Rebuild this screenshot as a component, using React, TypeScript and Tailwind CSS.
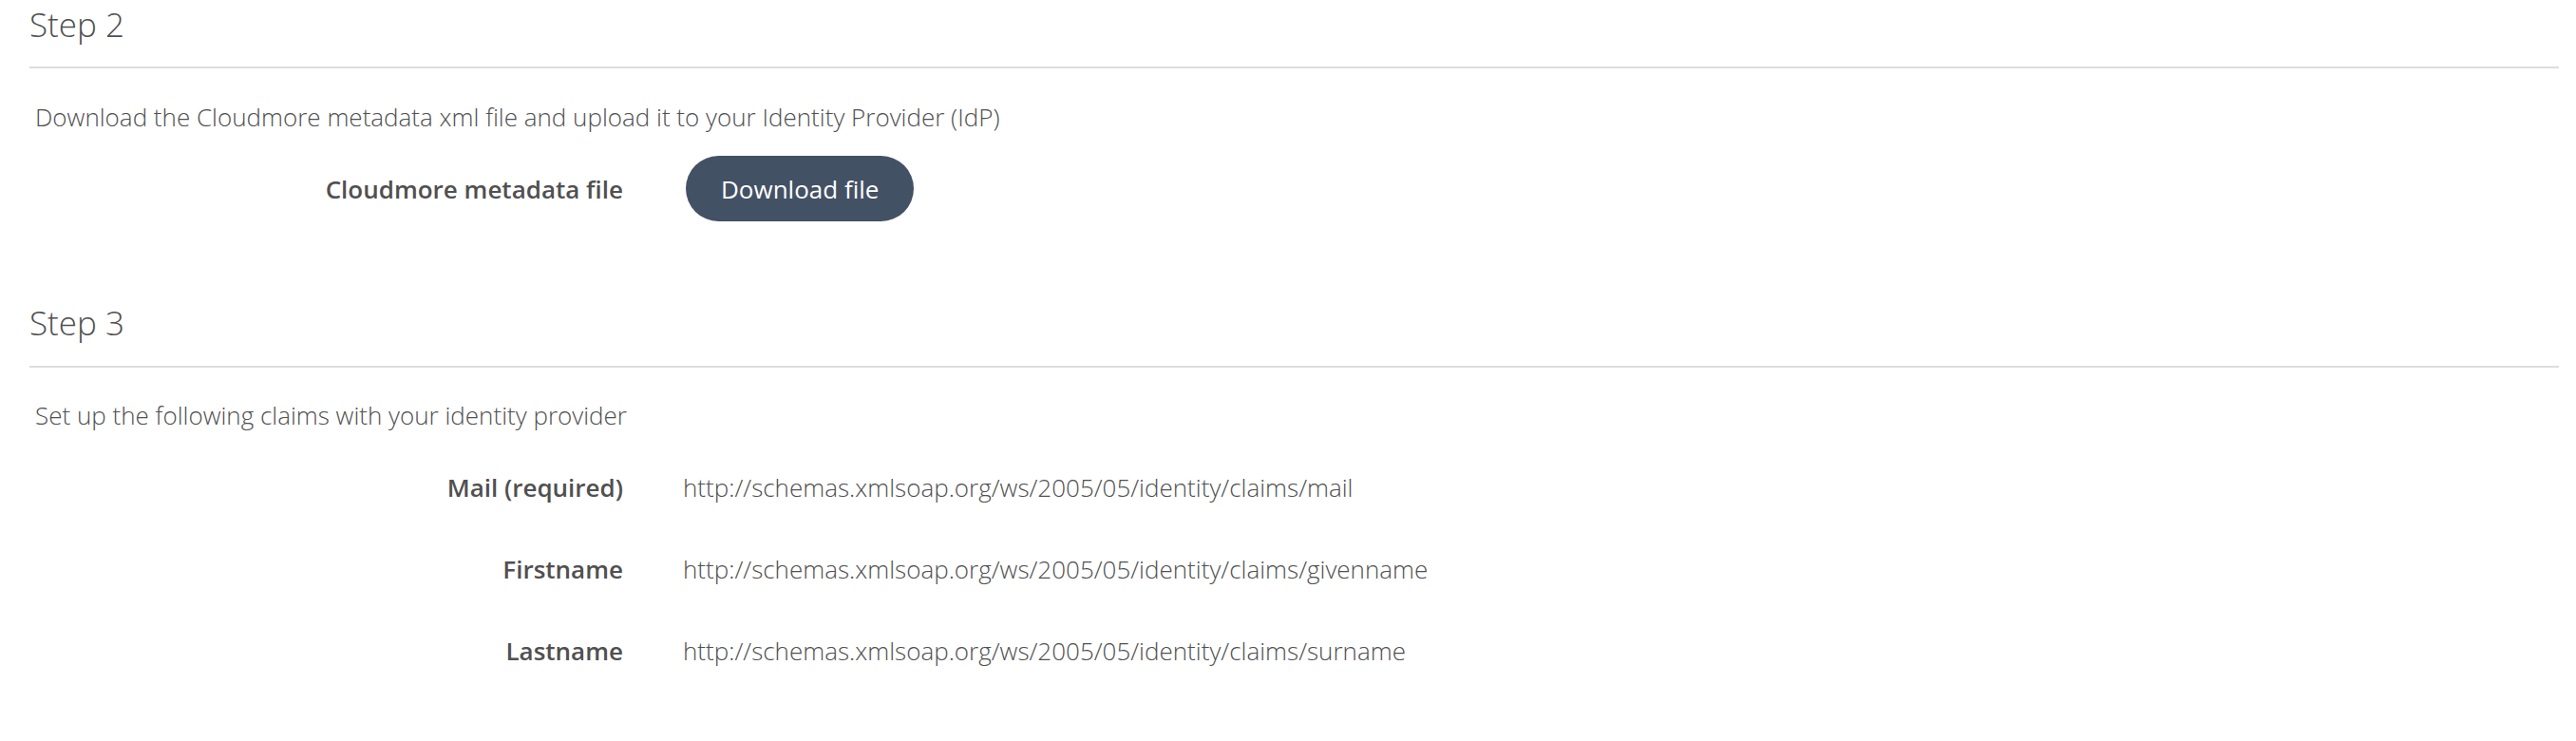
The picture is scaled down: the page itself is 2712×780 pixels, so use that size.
const claims = [
  { label: "Mail (required)", value: "http://schemas.xmlsoap.org/ws/2005/05/identity/claims/mail" },
  { label: "Firstname", value: "http://schemas.xmlsoap.org/ws/2005/05/identity/claims/givenname" },
  { label: "Lastname", value: "http://schemas.xmlsoap.org/ws/2005/05/identity/claims/surname" },
];

function StepHeader({ title, className = "" }: { title: string; className?: string }) {
  return (
    <div className={`border-b-2 border-[#dddddd] pt-[2px] ${className}`}>
      <h2 className="text-[35px] font-light leading-[48px] text-[#505050]">{title}</h2>
    </div>
  );
}

export default function App() {
  return (
    <div className="min-h-[780px] w-full bg-white pl-[31px] pr-[18px] font-['Open_Sans',sans-serif] text-[#505050]">
      {/* Step 2 */}
      <section>
        <StepHeader title="Step 2" className="pb-[20px]" />
        <p className="mt-[33px] pl-[6px] text-[26px] font-light leading-[36px]">
          Download the Cloudmore metadata xml file and upload it to your Identity Provider (IdP)
        </p>
        <div className="mt-[23px] flex items-center">
          <div className="w-[625px] text-right text-[26px] font-semibold leading-[36px]">
            Cloudmore metadata file
          </div>
          <button
            type="button"
            className="ml-[66px] h-[69px] rounded-full bg-[#435165] px-[37px] text-[26px] leading-[36px] text-white"
          >
            Download file
          </button>
        </div>
      </section>

      {/* Step 3 */}
      <section className="mt-[81px]">
        <StepHeader title="Step 3" className="pb-[21px]" />
        <p className="mt-[32px] pl-[6px] text-[26px] font-light leading-[36px]">
          Set up the following claims with your identity provider
        </p>
        <div className="mt-[40px] flex flex-col gap-[50px]">
          {claims.map((c) => (
            <div key={c.label} className="flex items-center">
              <div className="w-[625px] text-right text-[26px] font-semibold leading-[36px]">{c.label}</div>
              <div className="ml-[63px] text-[26px] font-light leading-[36px]">{c.value}</div>
            </div>
          ))}
        </div>
      </section>
    </div>
  );
}
